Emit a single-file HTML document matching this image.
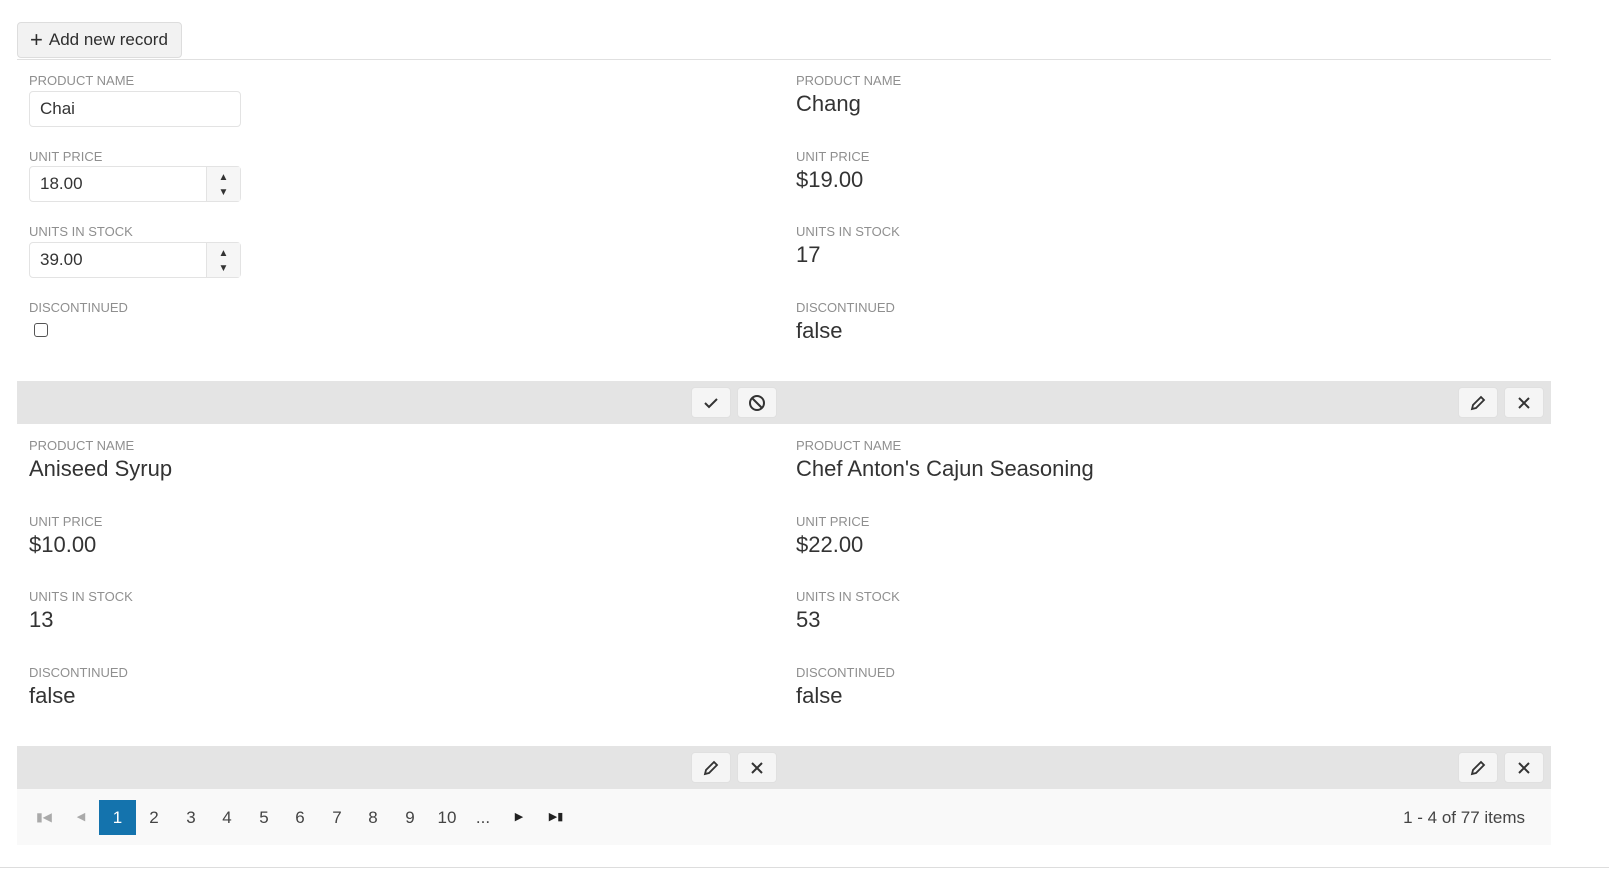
<!DOCTYPE html>
<html><head><style>
*{box-sizing:border-box;margin:0;padding:0}
body{width:1609px;height:893px;background:#fff;font-family:"Liberation Sans",Arial,sans-serif;color:#333;position:relative;overflow:hidden}
.a{position:absolute}
.lbl{position:absolute;font-size:13px;color:#8f8f8f;text-transform:uppercase;line-height:15px}
.val{position:absolute;font-size:22px;color:#333;line-height:26px}
.inp{position:absolute;border:1px solid #e3e3e3;border-radius:4px;background:#fff;font-size:17px;padding-left:10px;line-height:34px;height:36px}
.spin{position:absolute;right:0;top:0;width:34px;height:34px;border-left:1px solid #e3e3e3;background:#f6f6f6;font-size:10px;text-align:center;line-height:15px;padding-top:3px;color:#333}
.tb{position:absolute;left:17px;width:1534px;height:43px;background:#e4e4e4}
.btn{position:absolute;width:40px;height:31px;background:#f5f5f5;border:1px solid #e0e0e0;border-radius:4px;display:flex;align-items:center;justify-content:center}
.pg{position:absolute;top:800px;font-size:17px;color:#444;width:36px;height:35px;line-height:35px;text-align:center}
</style></head><body>
<div class="a" style="left:17px;top:22px;width:165px;height:36px;background:#f2f2f2;border:1px solid #ddd;border-radius:4px;font-size:17px;line-height:34px;padding-left:12px;color:#2e2e2e"><span style="font-size:22px;vertical-align:-2px;margin-right:6px">+</span>Add new record</div>
<div class="a" style="left:17px;top:59px;width:1534px;height:1px;background:#e0e0e0"></div>

<div class="lbl" style="left:29px;top:73px">Product Name</div>
<div class="inp" style="left:29px;top:91px;width:212px">Chai</div>
<div class="lbl" style="left:29px;top:149px">Unit Price</div>
<div class="inp" style="left:29px;top:166px;width:212px">18.00<div class="spin">▲<br>▼</div></div>
<div class="lbl" style="left:29px;top:224px">Units in Stock</div>
<div class="inp" style="left:29px;top:242px;width:212px">39.00<div class="spin">▲<br>▼</div></div>
<div class="lbl" style="left:29px;top:300px">Discontinued</div>
<div class="a" style="left:34px;top:323px;width:14px;height:14px;border:1px solid #555;border-radius:3px"></div>

<div class="lbl" style="left:796px;top:73px">Product Name</div><div class="val" style="left:796px;top:91px">Chang</div>
<div class="lbl" style="left:796px;top:149px">Unit Price</div><div class="val" style="left:796px;top:167px">$19.00</div>
<div class="lbl" style="left:796px;top:224px">Units in Stock</div><div class="val" style="left:796px;top:242px">17</div>
<div class="lbl" style="left:796px;top:300px">Discontinued</div><div class="val" style="left:796px;top:318px">false</div>

<div class="tb" style="top:381px"></div>
<div class="btn" style="left:691px;top:387px"><svg width="18" height="18" viewBox="0 0 18 18"><path d="M3 9l4 4 8-8" fill="none" stroke="#333" stroke-width="2"/></svg></div>
<div class="btn" style="left:737px;top:387px"><svg width="18" height="18" viewBox="0 0 18 18"><circle cx="9" cy="9" r="7" fill="none" stroke="#333" stroke-width="2"/><path d="M4 4l10 10" stroke="#333" stroke-width="2"/></svg></div>
<div class="btn" style="left:1458px;top:387px"><svg width="18" height="18" viewBox="0 0 18 18"><path d="M3 15l1-4 8-8 3 3-8 8z" fill="none" stroke="#333" stroke-width="1.8"/></svg></div>
<div class="btn" style="left:1504px;top:387px"><svg width="18" height="18" viewBox="0 0 18 18"><path d="M4 4l10 10M14 4l-10 10" stroke="#333" stroke-width="2"/></svg></div>

<div class="lbl" style="left:29px;top:438px">Product Name</div><div class="val" style="left:29px;top:456px">Aniseed Syrup</div>
<div class="lbl" style="left:29px;top:514px">Unit Price</div><div class="val" style="left:29px;top:532px">$10.00</div>
<div class="lbl" style="left:29px;top:589px">Units in Stock</div><div class="val" style="left:29px;top:607px">13</div>
<div class="lbl" style="left:29px;top:665px">Discontinued</div><div class="val" style="left:29px;top:683px">false</div>
<div class="lbl" style="left:796px;top:438px">Product Name</div><div class="val" style="left:796px;top:456px">Chef Anton's Cajun Seasoning</div>
<div class="lbl" style="left:796px;top:514px">Unit Price</div><div class="val" style="left:796px;top:532px">$22.00</div>
<div class="lbl" style="left:796px;top:589px">Units in Stock</div><div class="val" style="left:796px;top:607px">53</div>
<div class="lbl" style="left:796px;top:665px">Discontinued</div><div class="val" style="left:796px;top:683px">false</div>

<div class="tb" style="top:746px"></div>
<div class="btn" style="left:691px;top:752px"><svg width="18" height="18" viewBox="0 0 18 18"><path d="M3 15l1-4 8-8 3 3-8 8z" fill="none" stroke="#333" stroke-width="1.8"/></svg></div>
<div class="btn" style="left:737px;top:752px"><svg width="18" height="18" viewBox="0 0 18 18"><path d="M4 4l10 10M14 4l-10 10" stroke="#333" stroke-width="2"/></svg></div>
<div class="btn" style="left:1458px;top:752px"><svg width="18" height="18" viewBox="0 0 18 18"><path d="M3 15l1-4 8-8 3 3-8 8z" fill="none" stroke="#333" stroke-width="1.8"/></svg></div>
<div class="btn" style="left:1504px;top:752px"><svg width="18" height="18" viewBox="0 0 18 18"><path d="M4 4l10 10M14 4l-10 10" stroke="#333" stroke-width="2"/></svg></div>

<div class="a" style="left:17px;top:789px;width:1534px;height:56px;background:#f9f9f9"></div>
<div class="pg" style="left:26px;color:#aaa;font-size:12px">&#9646;&#9664;</div>
<div class="pg" style="left:63px;color:#aaa;font-size:11px">&#9664;</div>
<div class="pg" style="left:99px;background:#1473ad;color:#fff;width:37px">1</div>
<div class="pg" style="left:136px">2</div><div class="pg" style="left:173px">3</div><div class="pg" style="left:209px">4</div>
<div class="pg" style="left:246px">5</div><div class="pg" style="left:282px">6</div><div class="pg" style="left:319px">7</div>
<div class="pg" style="left:355px">8</div><div class="pg" style="left:392px">9</div><div class="pg" style="left:429px">10</div>
<div class="pg" style="left:465px">...</div>
<div class="pg" style="left:501px;font-size:11px;color:#222">&#9654;</div>
<div class="pg" style="left:538px;font-size:11px;color:#222">&#9654;&#9646;</div>
<div class="a" style="left:1300px;top:800px;width:225px;text-align:right;font-size:17px;line-height:35px;color:#444">1 - 4 of 77 items</div>
<div class="a" style="left:0;top:867px;width:1609px;height:1px;background:#ddd"></div>
</body></html>
